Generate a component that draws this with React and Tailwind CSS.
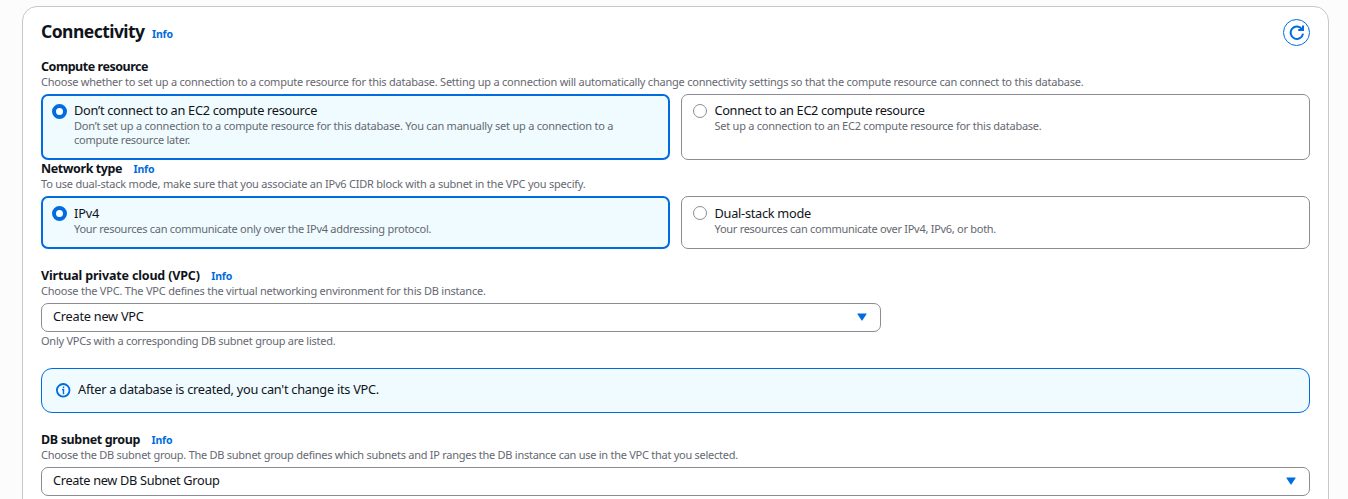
import React from "react";

function Info({ className = "" }) {
  return (
    <a className={`text-[10.5px] font-bold leading-[17px] tracking-[-0.2px] text-[#006ce0] ${className}`}>Info</a>
  );
}

function FieldHeader({ label, labelClass = "", info, description, descriptionClass = "" }) {
  return (
    <div className="mb-[5px]">
      <div className="flex h-[17px] items-center gap-[11.5px] whitespace-nowrap">
        <span className={`text-[12.5px] font-bold leading-[17px] text-[#0f141a] ${labelClass}`}>{label}</span>
        {info && <Info className="pt-0.5" />}
      </div>
      <div className={`h-[14px] whitespace-nowrap text-[11px] leading-[14px] text-[#656871] ${descriptionClass}`}>
        {description}
      </div>
    </div>
  );
}

function Radio({ checked }) {
  return checked ? (
    <span className="size-[15px] shrink-0 rounded-full border-[4.5px] border-[#006ce0] bg-white" />
  ) : (
    <span className="size-[14px] shrink-0 rounded-full border border-[#8c8c94] bg-white" />
  );
}

function Tile({ checked, title, titleClass = "", lines, textClass = "" }) {
  return (
    <div
      className={`flex flex-1 rounded-[7px] ${
        checked
          ? "gap-[7px] border-2 border-[#006ce0] bg-[#f0fbff] pl-[9px] pt-[8px]"
          : "gap-[7.5px] border border-[#8c8c94] bg-white pl-[11px] pt-[9px]"
      }`}
    >
      <Radio checked={checked} />
      <div className={`whitespace-nowrap ${textClass}`}>
        <div className={`h-[17px] text-[12.75px] leading-4 text-[#0f141a] ${titleClass}`}>{title}</div>
        {lines.map((line) => (
          <div key={line.text} className={`h-[14px] text-[11px] leading-[14px] text-[#656871] ${line.className}`}>
            {line.text}
          </div>
        ))}
      </div>
    </div>
  );
}

function Select({ value, className = "", valueClass = "" }) {
  return (
    <div
      className={`flex h-[29px] items-center justify-between rounded-[7px] border border-[#8c8c94] bg-white pl-[11px] pr-[13px] ${className}`}
    >
      <span className={`-mt-[3px] text-[12.75px] leading-[18px] text-[#0f141a] ${valueClass}`}>{value}</span>
      <svg className="-mt-px" width="10" height="8" viewBox="0 0 10 8" fill="#006ce0">
        <path d="M.7.4h8.6q.6 0 .3.5L5.5 7.3q-.5.7-1 0L.4.9Q.1.4.7.4Z" />
      </svg>
    </div>
  );
}

export default function App() {
  return (
    <div className="h-[499px] overflow-hidden bg-[#fcfcfd] pl-[22px] pr-[19px] pt-[6px] font-['Noto_Sans',sans-serif]">
      <section className="h-[520px] rounded-t-[15px] border border-[#c6c6cd] bg-white px-[18px] pt-3">
        <header className="flex h-[27px] items-center justify-between">
          <div className="-mt-[3px] flex items-center gap-[7.5px]">
            <h2 className="text-[17.5px] font-bold leading-6 tracking-[-0.54px] text-[#0f141a]">Connectivity</h2>
            <Info className="pt-[6px]" />
          </div>
          <button aria-label="Refresh" className="flex size-[27px] items-center justify-center rounded-full border border-[#006ce0]">
            <svg width="15" height="15" viewBox="0 0 15 15" fill="none" stroke="#006ce0" strokeWidth="2">
              <path d="M14 8.6A6.2 6.2 0 1 1 13.1 4.4" />
              <path d="M14 .4V5H9.2" />
            </svg>
          </button>
        </header>

        <div className="mt-3">
          <FieldHeader
            label="Compute resource"
            labelClass="tracking-[-0.46px]"
            description="Choose whether to set up a connection to a compute resource for this database. Setting up a connection will automatically change connectivity settings so that the compute resource can connect to this database."
            descriptionClass="tracking-[-0.226px]"
          />
          <div className="flex h-[66px] gap-[11px]">
            <Tile
              checked
              textClass="-mt-0.5"
              title="Don’t connect to an EC2 compute resource"
              titleClass="tracking-[-0.28px]"
              lines={[
                {
                  text: "Don’t set up a connection to a compute resource for this database. You can manually set up a connection to a",
                  className: "tracking-[-0.222px]",
                },
                { text: "compute resource later.", className: "tracking-[-0.25px]" },
              ]}
            />
            <Tile
              textClass="-mt-0.5"
              title="Connect to an EC2 compute resource"
              titleClass="tracking-[-0.33px]"
              lines={[
                {
                  text: "Set up a connection to an EC2 compute resource for this database.",
                  className: "tracking-[-0.245px]",
                },
              ]}
            />
          </div>
        </div>

        <div>
          <FieldHeader
            label="Network type"
            labelClass="tracking-[-0.42px]"
            info
            description="To use dual-stack mode, make sure that you associate an IPv6 CIDR block with a subnet in the VPC you specify."
            descriptionClass="tracking-[-0.22px]"
          />
          <div className="flex h-[53px] gap-[11px]">
            <Tile
              checked
              textClass="-mt-px"
              title="IPv4"
              titleClass="tracking-[-0.15px]"
              lines={[
                {
                  text: "Your resources can communicate only over the IPv4 addressing protocol.",
                  className: "tracking-[-0.265px]",
                },
              ]}
            />
            <Tile
              textClass="-mt-px"
              title="Dual-stack mode"
              titleClass="tracking-[-0.27px]"
              lines={[
                {
                  text: "Your resources can communicate over IPv4, IPv6, or both.",
                  className: "tracking-[-0.28px]",
                },
              ]}
            />
          </div>
        </div>

        <div className="mt-[18px]">
          <FieldHeader
            label="Virtual private cloud (VPC)"
            labelClass="tracking-[-0.16px]"
            info
            description="Choose the VPC. The VPC defines the virtual networking environment for this DB instance."
            descriptionClass="tracking-[-0.215px]"
          />
          <Select value="Create new VPC" className="w-[840px]" valueClass="tracking-[-0.25px]" />
          <div className="mt-0.5 h-[14px] text-[11px] leading-[14px] tracking-[-0.25px] text-[#656871]">
            Only VPCs with a corresponding DB subnet group are listed.
          </div>
        </div>

        <div className="mt-5 flex h-[45px] items-center gap-[7px] rounded-[11px] border border-[#006ce0] bg-[#f0fbff] pl-[14px]">
          <svg width="15" height="15" viewBox="0 0 15 15" fill="none" stroke="#006ce0" strokeWidth="1.8">
            <circle cx="7.2" cy="7.3" r="6.3" />
            <path d="M7.5 3.6v1.6M6 6.6h1.5v4.6" strokeWidth="1.4" />
          </svg>
          <span className="-mt-[3px] text-[12.75px] leading-[18px] tracking-[-0.26px] text-[#0f141a]">
            After a database is created, you can't change its VPC.
          </span>
        </div>

        <div className="mt-[18px]">
          <FieldHeader
            label="DB subnet group"
            labelClass="tracking-[-0.35px]"
            info
            description="Choose the DB subnet group. The DB subnet group defines which subnets and IP ranges the DB instance can use in the VPC that you selected."
            descriptionClass="tracking-[-0.264px]"
          />
          <Select value="Create new DB Subnet Group" valueClass="tracking-[-0.33px]" />
        </div>
      </section>
    </div>
  );
}
